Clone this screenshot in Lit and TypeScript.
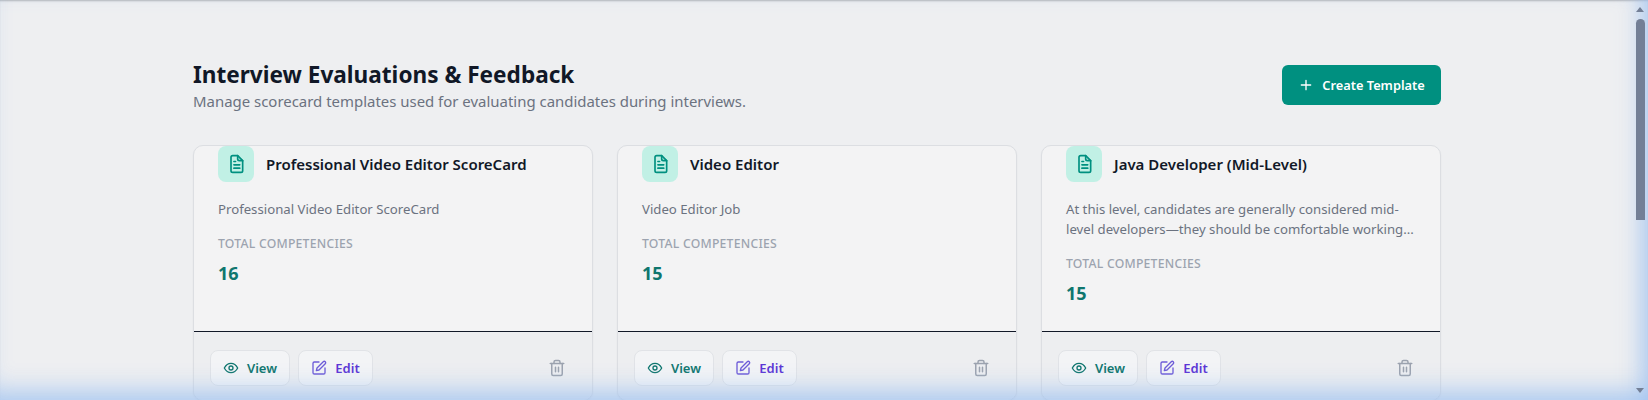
import { LitElement, html, css, svg } from "lit";
import { customElement } from "lit/decorators.js";

const cards = [
  { title: "Professional Video Editor ScoreCard", desc: "Professional Video Editor ScoreCard", count: 16 },
  { title: "Video Editor", desc: "Video Editor Job", count: 15 },
  { title: "Java Developer (Mid-Level)", desc: "At this level, candidates are generally considered mid-level developers—they should be comfortable working...", count: 15 },
];

const docIcon = svg`<path d="M14 2H8a2 2 0 0 0-2 2v16a2 2 0 0 0 2 2h10a2 2 0 0 0 2-2V8z"/><path d="M14 2v4a2 2 0 0 0 2 2h4"/><path d="M9.5 13h7M9.5 17h7M9.5 9h2"/>`;
const eyeIcon = svg`<path d="M2 12s3.6-7 10-7 10 7 10 7-3.6 7-10 7-10-7-10-7z"/><circle cx="12" cy="12" r="3"/>`;
const editIcon = svg`<path d="M12 3H5a2 2 0 0 0-2 2v14a2 2 0 0 0 2 2h14a2 2 0 0 0 2-2v-7"/><path d="M18.4 2.6a2.1 2.1 0 1 1 3 3L12 15l-4 1 1-4z"/>`;
const trashIcon = svg`<path d="M3 6h18"/><path d="M19 6v14a2 2 0 0 1-2 2H7a2 2 0 0 1-2-2V6"/><path d="M8 6V4a2 2 0 0 1 2-2h4a2 2 0 0 1 2 2v2"/><path d="M10 11v6M14 11v6"/>`;
const plusIcon = svg`<path d="M5 12h14M12 5v14"/>`;

@customElement("app-root")
export class AppRoot extends LitElement {
  static styles = css`
    :host {
      display: block;
      height: 400px;
      overflow: hidden;
      position: relative;
      background: #eeeff1;
      font-family: "Noto Sans", sans-serif;
      color: #111827;
    }
    svg { fill: none; stroke: currentColor; stroke-width: 2; stroke-linecap: round; stroke-linejoin: round; display: block; flex: none; }
    .page { width: 1634px; display: flex; justify-content: center; }
    .main { width: 1248px; padding-top: 59px; }
    .head { display: flex; justify-content: space-between; align-items: flex-start; margin-bottom: 34px; }
    h1 { margin: 0; font-size: 22.6px; line-height: 32px; font-weight: 700; color: #111827; }
    .sub { margin: 0; font-size: 14.95px; line-height: 20px; color: #6b7280; }
    .create { margin-top: 6px; height: 40px; width: 159px; box-sizing: border-box; display: flex; align-items: center; justify-content: center; gap: 8px; background: #009080; color: #fff; border-radius: 6px; font-size: 12.8px; font-weight: 600; }
    .grid { display: grid; grid-template-columns: repeat(3, 1fr); gap: 24px; }
    .card { display: flex; flex-direction: column; box-sizing: border-box; border: 1px solid #dcdee2; border-radius: 10px; background: #f3f3f4; height: 256px; overflow: hidden; box-shadow: 0 1px 2px rgba(0,0,0,.05); }
    .body { flex: 1; padding: 0 24px; border-bottom: 1px solid #111827; }
    .title-row { display: flex; align-items: center; gap: 12px; }
    .doc { width: 36px; height: 36px; border-radius: 8px; background: #c1f0e5; color: #009080; display: flex; align-items: center; justify-content: center; }
    h3 { margin: 0; font-size: 15px; font-weight: 600; color: #111827; }
    .desc { margin: 17px 0 0; font-size: 13.2px; line-height: 20px; color: #6b7280; }
    .label { margin-top: 17px; font-size: 12.2px; line-height: 16px; font-weight: 500; color: #9ca3af; letter-spacing: .02em; }
    .value { margin-top: 7px; font-size: 18px; line-height: 28px; font-weight: 700; color: #0f766e; }
    .foot { display: flex; align-items: center; gap: 8px; padding: 18px 16px 14px; background: #edeef0; }
    .btn { display: flex; align-items: center; justify-content: center; gap: 8px; box-sizing: border-box; height: 36px; border: 1px solid #e1e3e7; border-radius: 8px; font-size: 13px; font-weight: 600; background: #f3f4f6; }
    .view { width: 80px; color: #0f766e; }
    .edit { width: 75px; color: #5b35d5; }
    .edit svg { color: #6d5bd8; }
    .trash { margin-left: auto; margin-right: 10px; color: #9ca3af; }
    .glow { position: absolute; inset: 0; pointer-events: none; box-shadow: inset 0 -24px 24px -14px rgba(160,195,240,.8), inset -22px 0 22px -14px rgba(160,195,240,.75), inset 0 2px 2px -1px rgba(120,120,125,.5); }
    .bar { position: absolute; top: 0; right: 0; bottom: 0; width: 12px; pointer-events: none; }
    .thumb { position: absolute; left: 0; top: 19px; width: 9px; height: 201px; border-radius: 5px 5px 0 0; background: #737f96; }
    .up, .down { position: absolute; left: 0; width: 0; height: 0; border-left: 4.5px solid transparent; border-right: 4.5px solid transparent; }
    .up { top: 7px; border-bottom: 5px solid #737f96; }
    .down { bottom: 7px; border-top: 5px solid #737f96; }
  `;

  render() {
    return html`
      <div class="page"><div class="main">
        <div class="head">
          <div>
            <h1>Interview Evaluations &amp; Feedback</h1>
            <p class="sub">Manage scorecard templates used for evaluating candidates during interviews.</p>
          </div>
          <div class="create"><svg width="16" height="16" viewBox="0 0 24 24">${plusIcon}</svg>Create Template</div>
        </div>
        <div class="grid">
          ${cards.map((c) => html`
            <div class="card">
              <div class="body">
                <div class="title-row">
                  <div class="doc"><svg width="20" height="20" viewBox="0 0 24 24">${docIcon}</svg></div>
                  <h3>${c.title}</h3>
                </div>
                <p class="desc">${c.desc}</p>
                <div class="label">TOTAL COMPETENCIES</div>
                <div class="value">${c.count}</div>
              </div>
              <div class="foot">
                <div class="btn view"><svg width="16" height="16" viewBox="0 0 24 24">${eyeIcon}</svg>View</div>
                <div class="btn edit"><svg width="16" height="16" viewBox="0 0 24 24">${editIcon}</svg>Edit</div>
                <div class="trash"><svg width="18" height="18" viewBox="0 0 24 24">${trashIcon}</svg></div>
              </div>
            </div>`)}
        </div>
      </div></div>
      <div class="glow"></div>
      <div class="bar"><div class="up"></div><div class="thumb"></div><div class="down"></div></div>
    `;
  }
}
